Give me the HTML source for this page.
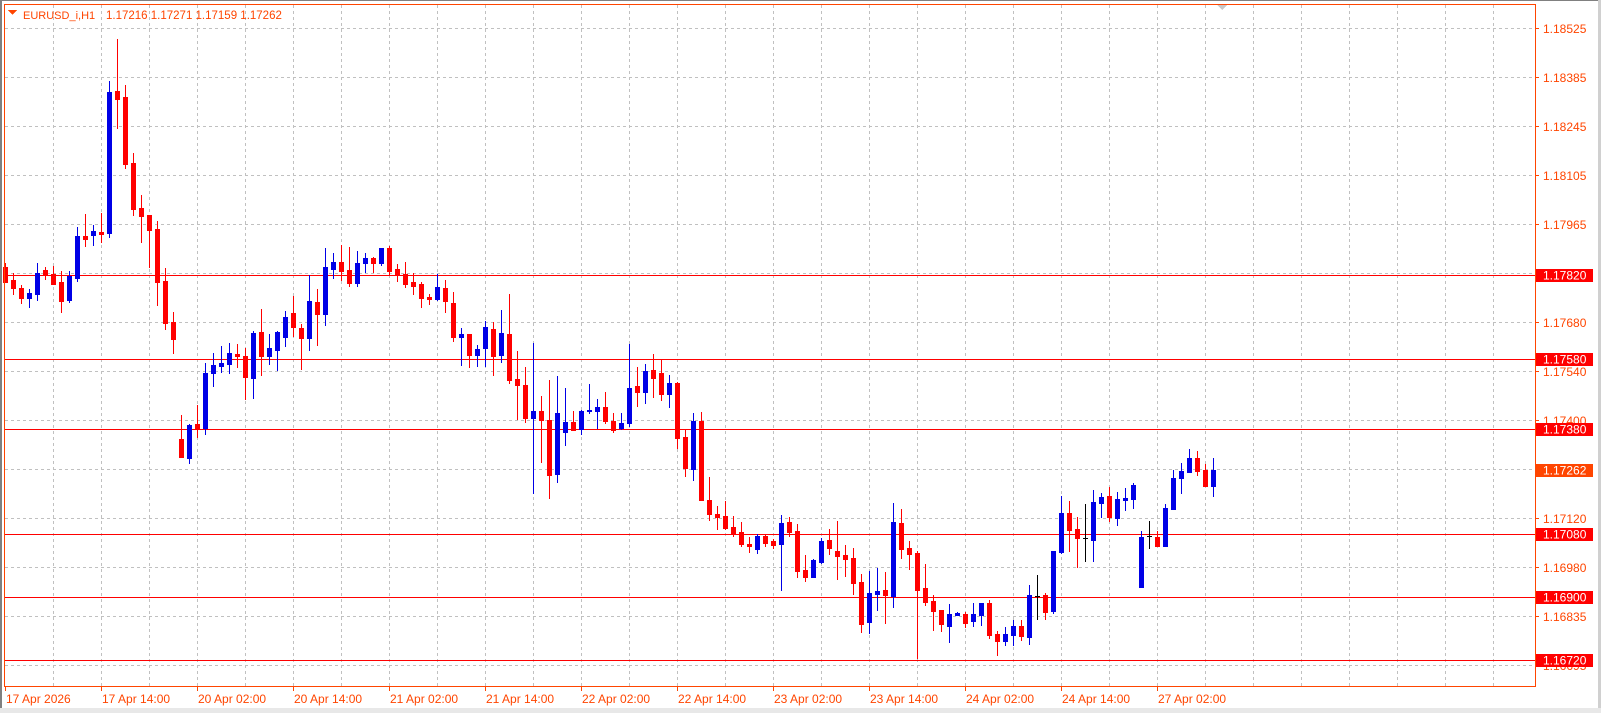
<!DOCTYPE html>
<html><head><meta charset="utf-8">
<style>
html,body{margin:0;padding:0;background:#fff;width:1601px;height:713px;overflow:hidden}
svg{display:block}
text{font-family:"Liberation Sans",sans-serif;font-size:12px}
</style></head>
<body>
<svg id="c" width="1601" height="713" xmlns="http://www.w3.org/2000/svg" shape-rendering="crispEdges">
<rect x="0" y="0" width="1601" height="713" fill="#fff"/>
<rect x="0" y="0" width="1601" height="1" fill="#808080"/>
<rect x="0" y="0" width="2" height="713" fill="#808080"/>
<rect x="1598" y="0" width="3" height="713" fill="#d0d0d0"/>
<rect x="0" y="708" width="1601" height="5" fill="#e8e8e8"/>
<g id="grid" stroke="#c0c0c0" stroke-width="1" stroke-dasharray="3,3"></g>
<g id="hl" stroke="#ff0000" stroke-width="1"></g>
<g id="candles"></g>
<rect x="4.5" y="4.5" width="1531" height="682" fill="none" stroke="#ff4500" stroke-width="1"/>
<g id="axis" fill="#ff4500"></g>
<polygon points="8,10 17,10 12.5,15" fill="#ff4500"/>
<text x="23" y="19" fill="#ff4500" style="font-size:11px">EURUSD_i,H1</text>
<text x="106" y="19" fill="#ff4500" style="font-size:11.5px">1.17216 1.17271 1.17159 1.17262</text>
<polygon points="1217,5 1227,5 1222,10" fill="#c8c8c8"/>
</svg>
<script>
var NS="http://www.w3.org/2000/svg";
function el(p,t,a,txt){var e=document.createElementNS(NS,t);for(var k in a)e.setAttribute(k,a[k]);if(txt!==undefined)e.textContent=txt;document.getElementById(p).appendChild(e);return e;}
for(var x=53;x<=1493;x+=48){el("grid","line",{x1:x+.5,y1:5,x2:x+.5,y2:686});}
var plabels=["1.18525","1.18385","1.18245","1.18105","1.17965","1.17820","1.17680","1.17540","1.17400","1.17260","1.17120","1.16980","1.16835","1.16695"];
for(var k=0;k<14;k++){var y=Math.round(28.3+49*k)+.5;el("grid","line",{x1:5,y1:y,x2:1535,y2:y});
 el("axis","rect",{x:1535,y:y-.5,width:4,height:1});
 el("axis","text",{x:1543,y:y+4.5},plabels[k]);}
var rl=[[275,"1.17820"],[359,"1.17580"],[429,"1.17380"],[534,"1.17080"],[597,"1.16900"],[660,"1.16720"]];
rl.forEach(function(r){el("hl","line",{x1:5,y1:r[0]+.5,x2:1535,y2:r[0]+.5});});
var tl=["17 Apr 2026","17 Apr 14:00","20 Apr 02:00","20 Apr 14:00","21 Apr 02:00","21 Apr 14:00","22 Apr 02:00","22 Apr 14:00","23 Apr 02:00","23 Apr 14:00","24 Apr 02:00","24 Apr 14:00","27 Apr 02:00"];
for(var i=0;i<tl.length;i++){var tx=5+96*i;el("axis","rect",{x:tx,y:687,width:1,height:4});el("axis","text",{x:tx+1,y:703},tl[i]);}
var d="r 267 282 263 283|r 280 288 273 295|r 288 298 285 304|b 293 298 289 308|b 273 294 263 301|r 270 274 267 280|r 274 284 266 285|r 282 301 271 313|b 276 300 271 303|b 236 278 227 282|r 236 239 214 247|b 231 235 225 246|r 232 234 213 243|b 92 233 81 238|r 91 99 39 129|r 97 164 85 169|r 163 209 153 216|r 208 216 195 243|r 215 230 215 268|r 229 282 221 306|r 281 323 268 330|r 322 339 312 354|r 439 457 415 457|b 425 458 424 464|r 424 428 405 438|b 373 428 363 435|b 365 373 353 387|b 363 366 346 373|b 353 364 343 374|r 354 356 344 368|r 356 377 348 400|b 333 378 331 399|r 332 356 309 376|b 348 356 334 365|b 332 350 331 371|b 317 337 311 347|r 313 327 296 337|r 328 338 324 370|b 301 338 275 351|r 302 314 289 346|b 267 314 248 326|b 262 269 253 279|r 262 271 245 281|r 270 283 247 287|b 263 283 251 287|b 258 263 253 273|r 258 263 257 273|b 248 263 248 266|r 248 271 246 275|r 269 275 264 282|r 274 284 262 288|r 282 286 273 295|r 284 298 282 308|r 297 299 294 305|b 287 299 274 301|r 288 301 280 313|r 303 337 292 342|b 334 337 328 366|r 334 355 334 368|b 349 355 345 367|b 327 348 321 367|r 329 356 322 376|b 333 355 310 363|r 334 380 294 384|r 379 385 351 420|r 385 418 367 423|b 411 418 343 494|r 411 420 396 463|r 420 475 380 499|b 413 474 376 483|b 422 432 388 446|r 422 430 411 430|b 411 429 410 435|b 410 411 384 414|b 407 411 399 429|r 407 421 392 424|r 421 430 413 433|b 423 428 413 430|b 388 423 344 427|r 386 392 367 407|b 371 392 364 404|r 370 378 354 398|r 373 394 360 401|b 383 394 375 408|r 383 438 382 449|r 437 468 429 477|b 421 469 413 481|r 421 500 412 501|r 500 514 477 521|r 514 517 506 530|r 516 528 501 530|r 527 534 516 537|r 532 544 522 547|r 544 546 537 553|b 536 549 534 554|r 536 543 534 547|r 541 545 539 549|b 523 544 515 591|r 522 532 517 537|r 531 571 524 578|r 570 577 555 582|b 560 577 559 578|b 541 562 538 564|r 540 548 529 555|r 551 556 521 580|r 555 559 545 577|r 558 583 548 595|r 582 624 574 633|b 593 622 571 634|b 591 594 568 611|r 590 595 572 624|b 522 596 503 608|r 523 549 509 559|r 548 554 541 570|r 553 590 551 659|r 588 602 564 606|r 601 611 595 631|r 610 624 610 632|b 614 626 604 643|b 613 615 612 616|r 614 623 612 628|b 614 621 603 627|b 603 615 603 626|r 603 635 600 639|r 634 641 631 656|b 634 641 627 646|b 626 635 620 646|r 626 636 620 641|b 595 637 585 645|k 596 596 575 620|r 595 612 593 620|b 551 611 551 614|b 513 552 496 554|r 513 530 501 552|r 529 538 517 568|k 538 538 504 562|b 502 540 490 562|b 497 503 493 518|r 496 517 487 522|b 499 518 492 526|b 498 500 488 511|b 485 499 483 509|b 537 587 531 587|k 536 536 521 549|r 537 546 531 546|b 508 546 504 546|b 478 509 470 509|b 471 478 463 494|b 458 472 449 472|r 458 471 451 476|r 470 486 464 487|b 470 486 458 497".split("|");
var col={r:"#ff0000",b:"#0000e6",k:"#000000"};
d.forEach(function(s,i){var p=s.split(" ");var c=col[p[0]];var bt=+p[1],bb=+p[2],wt=+p[3],wb=+p[4];var cx=5+8*i;
 el("candles","rect",{x:cx,y:wt,width:1,height:Math.max(1,wb-wt),fill:c});
 var h=bb-bt; if(h<1)h=1;
 if(p[0]==="k"){el("candles","rect",{x:cx-2,y:bt,width:5,height:1,fill:c});}
 else el("candles","rect",{x:cx-2,y:bt,width:5,height:h+1,fill:c});
});
rl.forEach(function(r){el("axis","rect",{x:1536,y:r[0]-6,width:57,height:13,fill:"#ff0000"});el("axis","text",{x:1543,y:r[0]+4.5,fill:"#ffffff"},r[1]);});
el("axis","rect",{x:1536,y:464,width:57,height:13,fill:"#ff4500"});
el("axis","text",{x:1543,y:474.5,fill:"#ffffff"},"1.17262");
</script>
</body></html>
